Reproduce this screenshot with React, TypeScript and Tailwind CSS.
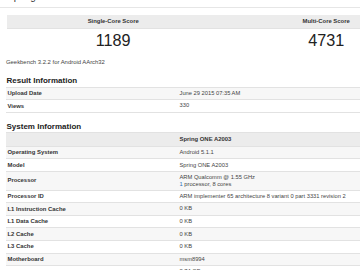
import React from 'react';

type Row = { label: string; value: React.ReactNode; tall?: boolean };

const resultRows: Row[] = [
  { label: 'Upload Date', value: 'June 29 2015 07:35 AM' },
  { label: 'Views', value: '330' },
];

const systemRows: Row[] = [
  { label: 'Operating System', value: 'Android 5.1.1' },
  { label: 'Model', value: 'Spring ONE A2003' },
  {
    label: 'Processor',
    tall: true,
    value: (
      <>
        <div>ARM Qualcomm @ 1.55 GHz</div>
        <div>
          <span className="text-[#2a6ebb]">1</span> processor, 8 cores
        </div>
      </>
    ),
  },
  { label: 'Processor ID', value: 'ARM implementer 65 architecture 8 variant 0 part 3331 revision 2' },
  { label: 'L1 Instruction Cache', value: '0 KB' },
  { label: 'L1 Data Cache', value: '0 KB' },
  { label: 'L2 Cache', value: '0 KB' },
  { label: 'L3 Cache', value: '0 KB' },
  { label: 'Motherboard', value: 'msm8994' },
  { label: 'Memory', value: '2.74 GB' },
];

const InfoTable: React.FC<{ rows: Row[]; header?: string }> = ({ rows, header }) => (
  <div className="ml-[6px] border-b border-[#e2e2e2]">
    {header && (
      <div className="flex items-center h-[14.2px] bg-[#ececec] border-t border-[#e2e2e2]">
        <div className="w-[172px] shrink-0" />
        <div className="pl-[1.5px] font-bold text-[#333] text-[5.9px] whitespace-nowrap">{header}</div>
      </div>
    )}
    {rows.map((r, i) => (
      <div
        key={r.label}
        className={`flex items-center border-t border-[#e2e2e2] ${r.tall ? 'h-[18.6px]' : 'h-[12.6px]'} ${
          i % 2 === 0 ? 'bg-[#f7f7f7]' : 'bg-white'
        }`}
      >
        <div className="w-[172px] shrink-0 pl-[1.5px] font-bold text-[#333] text-[5.9px] whitespace-nowrap">{r.label}</div>
        <div className="pl-[1.5px] text-[#444] text-[5.75px] leading-[7.3px] whitespace-nowrap">{r.value}</div>
      </div>
    ))}
  </div>
);

export default function App() {
  return (
    <div className="w-[360px] h-[270px] overflow-hidden bg-white font-['Liberation_Sans',Arial,sans-serif]">
      {/* page title, mostly scrolled off */}
      <div className="h-[8px] overflow-hidden border-b border-[#e6e6e6]">
        <div className="-mt-[8px] pl-[7px] text-[10px] leading-[10px] text-[#333] whitespace-nowrap">Spring ONE A2003</div>
      </div>

      {/* scores */}
      <div className="mt-[7px] ml-[6.7px] flex flex-col w-[426px]">
        <div className="flex h-[14.3px] items-center bg-[#ececec] border-b border-[#e2e2e2] text-[5.9px] font-bold text-[#333]">
          <div className="w-[213px] text-center">Single-Core Score</div>
          <div className="w-[213px] text-center">Multi-Core Score</div>
        </div>
        <div className="flex h-[23px] items-center text-[16.2px] leading-[23px] text-[#222]">
          <div className="w-[213px] text-center">1189</div>
          <div className="w-[213px] text-center">4731</div>
        </div>
      </div>
      <div className="mt-[6.5px] pl-[6px] h-[7px] text-[5.9px] leading-[7px] text-[#444] whitespace-nowrap">
        Geekbench 3.2.2 for Android AArch32
      </div>

      <h3 className="mt-[10.2px] pl-[6.5px] h-[9px] text-[8px] leading-[9px] font-bold text-[#222]">Result Information</h3>
      <div className="mt-[1.7px]">
        <InfoTable rows={resultRows} />
      </div>

      <h3 className="mt-[8.9px] pl-[6.5px] h-[9px] text-[8px] leading-[9px] font-bold text-[#222]">System Information</h3>
      <div className="mt-[0.9px]">
        <InfoTable rows={systemRows} header="Spring ONE A2003" />
      </div>
    </div>
  );
}
